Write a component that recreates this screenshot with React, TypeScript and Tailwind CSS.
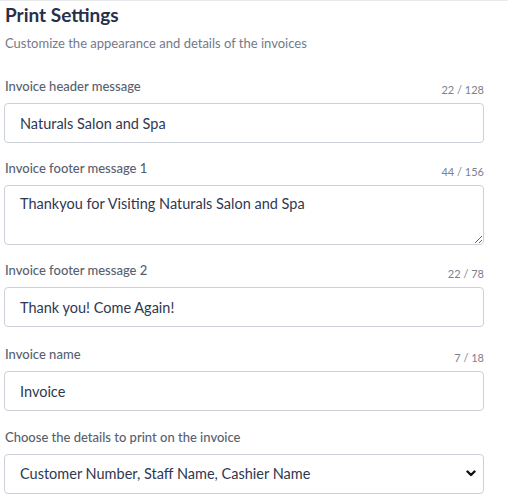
import { ChangeEvent, useState } from "react";

type Field = {
  id: string;
  label: string;
  value: string;
  max: number;
  multiline?: boolean;
};

const initialFields: Field[] = [
  { id: "header", label: "Invoice header message", value: "Naturals Salon and Spa", max: 128 },
  {
    id: "footer1",
    label: "Invoice footer message 1",
    value: "Thankyou for Visiting Naturals Salon and Spa",
    max: 156,
    multiline: true,
  },
  { id: "footer2", label: "Invoice footer message 2", value: "Thank you! Come Again!", max: 78 },
  { id: "name", label: "Invoice name", value: "Invoice", max: 18 },
];

const detailOptions = [
  "Customer Number, Staff Name, Cashier Name",
  "Customer Number, Staff Name",
  "Customer Number",
  "None",
];

const gaps = ["mt-6", "mt-[15px]", "mt-[15px]", "mt-[17px]"];

export default function App() {
  const [fields, setFields] = useState(initialFields);
  const [details, setDetails] = useState(detailOptions[0]);

  const update = (id: string) => (e: ChangeEvent<HTMLInputElement | HTMLTextAreaElement>) => {
    const value = e.target.value;
    setFields((prev) => prev.map((f) => (f.id === id ? { ...f, value } : f)));
  };

  return (
    <div className="min-h-screen bg-white border-t border-[#e9eaec] font-['Lato',sans-serif]">
      <div className="w-[480px] ml-1 pt-px">
        {/* Header */}
        <h1 className="ml-px text-[19px] leading-[26px] font-bold text-[#27304a]">Print Settings</h1>
        <p className="ml-px mt-[6px] text-[13px] leading-[18px] text-[#737a8a]">
          Customize the appearance and details of the invoices
        </p>

        {/* Text fields */}
        {fields.map((field, index) => (
          <div key={field.id} className={gaps[index]}>
            <div className="flex justify-between items-end h-5 mb-[7px]">
              <label htmlFor={field.id} className="ml-px text-[13px] leading-5 font-medium text-[#585f6f]">
                {field.label}
              </label>
              <span className="text-[11px] leading-3 text-[#7b8190]">
                {field.value.length} / {field.max}
              </span>
            </div>
            {field.multiline ? (
              <textarea
                id={field.id}
                value={field.value}
                maxLength={field.max}
                onChange={update(field.id)}
                className="block w-full h-[60px] rounded border border-[#ccd1d9] px-[15px] pt-[7px] text-[14.5px] leading-[22px] text-[#2f3850] outline-none"
              />
            ) : (
              <input
                id={field.id}
                value={field.value}
                maxLength={field.max}
                onChange={update(field.id)}
                className="block w-full h-10 rounded border border-[#ccd1d9] px-[15px] text-[14.5px] text-[#2f3850] outline-none"
              />
            )}
          </div>
        ))}

        {/* Details select */}
        <div className="mt-[16px]">
          <div className="flex items-end h-5 mb-[7px]">
            <label htmlFor="details" className="ml-px text-[13px] leading-5 font-medium text-[#585f6f]">
              Choose the details to print on the invoice
            </label>
          </div>
          <div className="relative">
            <select
              id="details"
              value={details}
              onChange={(e) => setDetails(e.target.value)}
              className="block w-full h-10 appearance-none rounded border border-[#ccd1d9] bg-white pl-[15px] pr-10 text-[14.5px] text-[#2f3850] outline-none"
            >
              {detailOptions.map((opt) => (
                <option key={opt}>{opt}</option>
              ))}
            </select>
            <svg
              className="pointer-events-none absolute right-[8px] top-[16px] w-[10px] h-[7px]"
              viewBox="0 0 10 7"
              fill="none"
              stroke="#111"
              strokeWidth="2.4"
              strokeLinecap="round"
              strokeLinejoin="round"
            >
              <path d="M1.5 1.5 5 5 8.5 1.5" />
            </svg>
          </div>
        </div>
      </div>
    </div>
  );
}
